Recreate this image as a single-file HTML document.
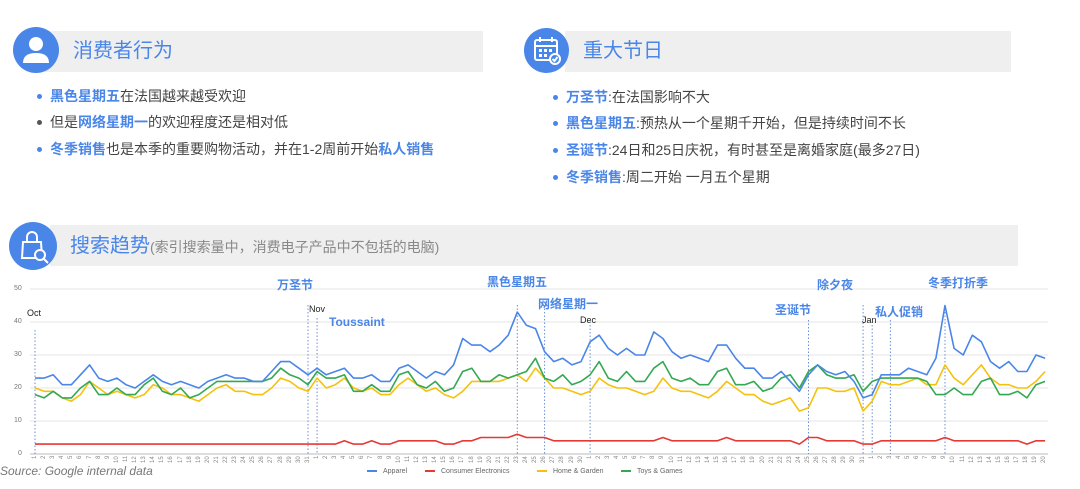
<!DOCTYPE html>
<html><head><meta charset="utf-8"><style>
*{margin:0;padding:0;box-sizing:border-box}
body{width:1080px;height:489px;background:#fff;position:relative;overflow:hidden;font-family:"Liberation Sans","Noto Sans CJK SC",sans-serif;color:#444}
.bar{position:absolute;background:#efefef}
.circ{position:absolute;border-radius:50%;background:#4a86e8}
.h{position:absolute;color:#4a86e8;font-size:20px;line-height:24px}
.li{position:absolute;font-size:14px;line-height:18px;color:#444;white-space:nowrap}
.li b{color:#4a86e8}
.li:before{content:"";position:absolute;left:-13px;top:7px;width:5px;height:5px;border-radius:50%;background:#4a86e8}
.li.g:before{background:#555}
.lb{position:absolute;color:#4a86e8;font-weight:bold;font-size:12px;white-space:nowrap}
.mk{position:absolute;color:#222;font-size:9px}
.ya{position:absolute;font-size:7px;color:#777;left:14px}
#ticks{position:absolute;left:31px;top:456px;display:flex;font-size:6px;color:#888}
#ticks span{width:9.1px;writing-mode:vertical-rl;transform:rotate(180deg);text-align:right;height:10px;line-height:9.1px}
.lg{position:absolute;top:468px;font-size:7px;color:#666;white-space:nowrap}
.lg i{display:inline-block;width:10px;height:2px;vertical-align:middle;margin-right:6px}
</style></head><body>
<div class="bar" style="left:45px;top:31px;width:438px;height:41px"></div>
<div class="circ" style="left:13px;top:27px;width:46px;height:46px"></div>
<svg style="position:absolute;left:13px;top:27px" width="46" height="46"><circle cx="23" cy="17" r="7" fill="#fff"/><path d="M10 36 Q10 26 23 26 Q36 26 36 36 Z" fill="#fff"/></svg>
<div class="h" style="left:73px;top:39px">消费者行为</div>
<div class="li" style="left:50px;top:87px"><b>黑色星期五</b>在法国越来越受欢迎</div>
<div class="li g" style="left:50px;top:113px">但是<b>网络星期一</b>的欢迎程度还是相对低</div>
<div class="li" style="left:50px;top:140px"><b>冬季销售</b>也是本季的重要购物活动，并在1-2周前开始<b>私人销售</b></div>

<div class="bar" style="left:565px;top:31px;width:446px;height:41px"></div>
<div class="circ" style="left:524px;top:28px;width:45px;height:45px"></div>
<svg style="position:absolute;left:524px;top:28px" width="45" height="45" fill="none" stroke="#fff" stroke-width="2"><rect x="11" y="12" width="22" height="20" rx="2"/><line x1="11" y1="18" x2="33" y2="18"/><line x1="16" y1="9" x2="16" y2="14"/><line x1="28" y1="9" x2="28" y2="14"/><g fill="#fff" stroke="none"><rect x="15" y="21" width="3" height="3"/><rect x="20" y="21" width="3" height="3"/><rect x="25" y="21" width="3" height="3"/><rect x="15" y="26" width="3" height="3"/><rect x="20" y="26" width="3" height="3"/></g><circle cx="31" cy="31" r="5" fill="#4a86e8"/><path d="M28.5 31 l2 2 l3-4"/></svg>
<div class="h" style="left:583px;top:39px">重大节日</div>
<div class="li" style="left:566px;top:88px"><b>万圣节</b>:在法国影响不大</div>
<div class="li" style="left:566px;top:114px"><b>黑色星期五</b>:预热从一个星期千开始，但是持续时间不长</div>
<div class="li" style="left:566px;top:141px"><b>圣诞节</b>:24日和25日庆祝，有时甚至是离婚家庭(最多27日)</div>
<div class="li" style="left:566px;top:168px"><b>冬季销售</b>:周二开始 一月五个星期</div>

<div class="bar" style="left:50px;top:225px;width:968px;height:41px"></div>
<div class="circ" style="left:9px;top:222px;width:48px;height:48px"></div>
<svg style="position:absolute;left:9px;top:222px" width="48" height="48" fill="none" stroke="#fff" stroke-width="2"><path d="M14 20 L32 20 L33 36 L13 36 Z"/><path d="M18 20 V15 a5 5 0 0 1 10 0 V20"/><circle cx="31" cy="33" r="5" fill="#4a86e8"/><line x1="35" y1="37" x2="39" y2="41"/></svg>
<div class="h" style="left:70px;top:234px">搜索趋势<span style="font-size:14px;color:#888">(索引搜索量中，消费电子产品中不包括的电脑)</span></div>

<svg id="ch" style="position:absolute;left:0;top:0" width="1080" height="489"></svg>
<div class="ya" style="top:285px">50</div><div class="ya" style="top:318px">40</div><div class="ya" style="top:351px">30</div><div class="ya" style="top:384px">20</div><div class="ya" style="top:417px">10</div><div class="ya" style="top:450px;left:18px">0</div>
<div class="mk" style="left:27px;top:308px">Oct</div>
<div class="mk" style="left:309px;top:304px">Nov</div>
<div class="mk" style="left:580px;top:315px">Dec</div>
<div class="mk" style="left:862px;top:315px">Jan</div>
<div class="lb" style="left:277px;top:276px">万圣节</div>
<div class="lb" style="left:329px;top:315px">Toussaint</div>
<div class="lb" style="left:487px;top:273px">黑色星期五</div>
<div class="lb" style="left:538px;top:295px">网络星期一</div>
<div class="lb" style="left:775px;top:301px">圣诞节</div>
<div class="lb" style="left:817px;top:276px">除夕夜</div>
<div class="lb" style="left:875px;top:303px">私人促销</div>
<div class="lb" style="left:928px;top:274px">冬季打折季</div>
<div id="ticks"><span>1</span><span>2</span><span>3</span><span>4</span><span>5</span><span>6</span><span>7</span><span>8</span><span>9</span><span>10</span><span>11</span><span>12</span><span>13</span><span>14</span><span>15</span><span>16</span><span>17</span><span>18</span><span>19</span><span>20</span><span>21</span><span>22</span><span>23</span><span>24</span><span>25</span><span>26</span><span>27</span><span>28</span><span>29</span><span>30</span><span>31</span><span>1</span><span>2</span><span>3</span><span>4</span><span>5</span><span>6</span><span>7</span><span>8</span><span>9</span><span>10</span><span>11</span><span>12</span><span>13</span><span>14</span><span>15</span><span>16</span><span>17</span><span>18</span><span>19</span><span>20</span><span>21</span><span>22</span><span>23</span><span>24</span><span>25</span><span>26</span><span>27</span><span>28</span><span>29</span><span>30</span><span>1</span><span>2</span><span>3</span><span>4</span><span>5</span><span>6</span><span>7</span><span>8</span><span>9</span><span>10</span><span>11</span><span>12</span><span>13</span><span>14</span><span>15</span><span>16</span><span>17</span><span>18</span><span>19</span><span>20</span><span>21</span><span>22</span><span>23</span><span>24</span><span>25</span><span>26</span><span>27</span><span>28</span><span>29</span><span>30</span><span>31</span><span>1</span><span>2</span><span>3</span><span>4</span><span>5</span><span>6</span><span>7</span><span>8</span><span>9</span><span>10</span><span>11</span><span>12</span><span>13</span><span>14</span><span>15</span><span>16</span><span>17</span><span>18</span><span>19</span><span>20</span></div>
<div style="position:absolute;left:0;top:464px;font-size:12px;font-style:italic;color:#777">Source: Google internal data</div>
<div class="lg" style="left:367px"><i style="background:#4a86e8"></i>Apparel</div>
<div class="lg" style="left:425px"><i style="background:#e53935"></i>Consumer Electronics</div>
<div class="lg" style="left:537px"><i style="background:#f4c20d"></i>Home &amp; Garden</div>
<div class="lg" style="left:621px"><i style="background:#34a853"></i>Toys &amp; Games</div>
<script>
var A=[23,23,24,21,21,24,27,23,22,23,21,20,22,24,22,21,22,21,20,22,23,24,23,23,22,22,25,28,28,26,24,26,24,25,26,23,23,24,22,22,26,27,25,23,25,24,27,35,33,33,31,33,36,43,39,38,31,28,29,27,28,34,36,32,30,32,30,30,37,35,31,29,30,29,28,33,33,29,26,26,23,23,25,22,19,24,27,25,24,25,22,17,18,24,24,24,26,25,24,29,45,32,30,36,34,28,26,28,25,25,30,29];
var H=[20,19,19,17,16,18,22,20,18,19,18,17,18,21,20,18,18,17,16,18,20,21,19,19,18,18,20,23,22,20,19,23,20,21,23,20,19,20,18,18,21,23,21,19,20,18,17,19,22,22,22,22,23,24,22,26,23,20,20,19,18,19,23,21,20,20,19,18,19,23,20,19,19,18,17,19,22,20,18,18,16,15,16,17,13,14,20,20,19,19,20,13,16,22,21,21,22,23,21,21,27,23,21,24,27,23,21,21,20,20,22,25];
var T=[18,17,19,17,17,20,22,18,18,20,18,18,21,23,19,18,20,17,18,20,22,22,22,22,22,22,23,26,24,23,21,25,23,23,24,19,19,21,19,19,24,25,21,20,22,19,20,25,26,22,22,24,23,24,25,29,23,22,24,21,22,24,28,23,22,25,22,22,26,28,23,22,23,21,21,25,26,21,21,22,19,20,23,24,20,25,27,24,23,23,24,19,22,23,23,23,23,23,22,18,18,20,18,18,22,23,18,18,19,17,21,22];
var E=[];for(var i=0;i<31;i++)E.push(3);E=E.concat([3,3,3,4,3,3,4,3,3,4,4,4,4,4,3,3,4,4,5,5,5,5,6,5,5,5,4,4,4,4,4,4,4,4,4,4,4,4,5,4,4,4,4,4,4,5,4,4,4,4,4,4,4,3,5,5,4,4,4,4,3,3,4,4,4,4,4,4,4,5,4,4,4,4,4,4,4,4,3,4,4]);
var s='',X=function(i){return 35+i*9.1},Y=function(v){return 454-v*3.3};
for(var v=0;v<=50;v+=10)s+='<line x1="30" x2="1048" y1="'+Y(v)+'" y2="'+Y(v)+'" stroke="'+(v?'#e4e4e4':'#bbb')+'" stroke-width="1"/>';
[[0,330],[30,305],[31,318],[53,305],[56,305],[61,325],[85,320],[91,305],[92,325],[94,320],[100,305]].forEach(function(d){var x=X(d[0]);s+='<line x1="'+x+'" x2="'+x+'" y1="'+d[1]+'" y2="454" stroke="#6d8fd8" stroke-width="1" stroke-dasharray="1.5,2"/>'});
function pl(a,c){var p=a.map(function(v,i){return X(i).toFixed(1)+','+Y(v).toFixed(1)}).join(' ');s+='<polyline points="'+p+'" fill="none" stroke="'+c+'" stroke-width="1.6" stroke-linejoin="round"/>'}
pl(E,'#e53935');pl(H,'#f4c20d');pl(T,'#34a853');pl(A,'#4a86e8');
document.getElementById('ch').innerHTML=s;
</script>
</body></html>
